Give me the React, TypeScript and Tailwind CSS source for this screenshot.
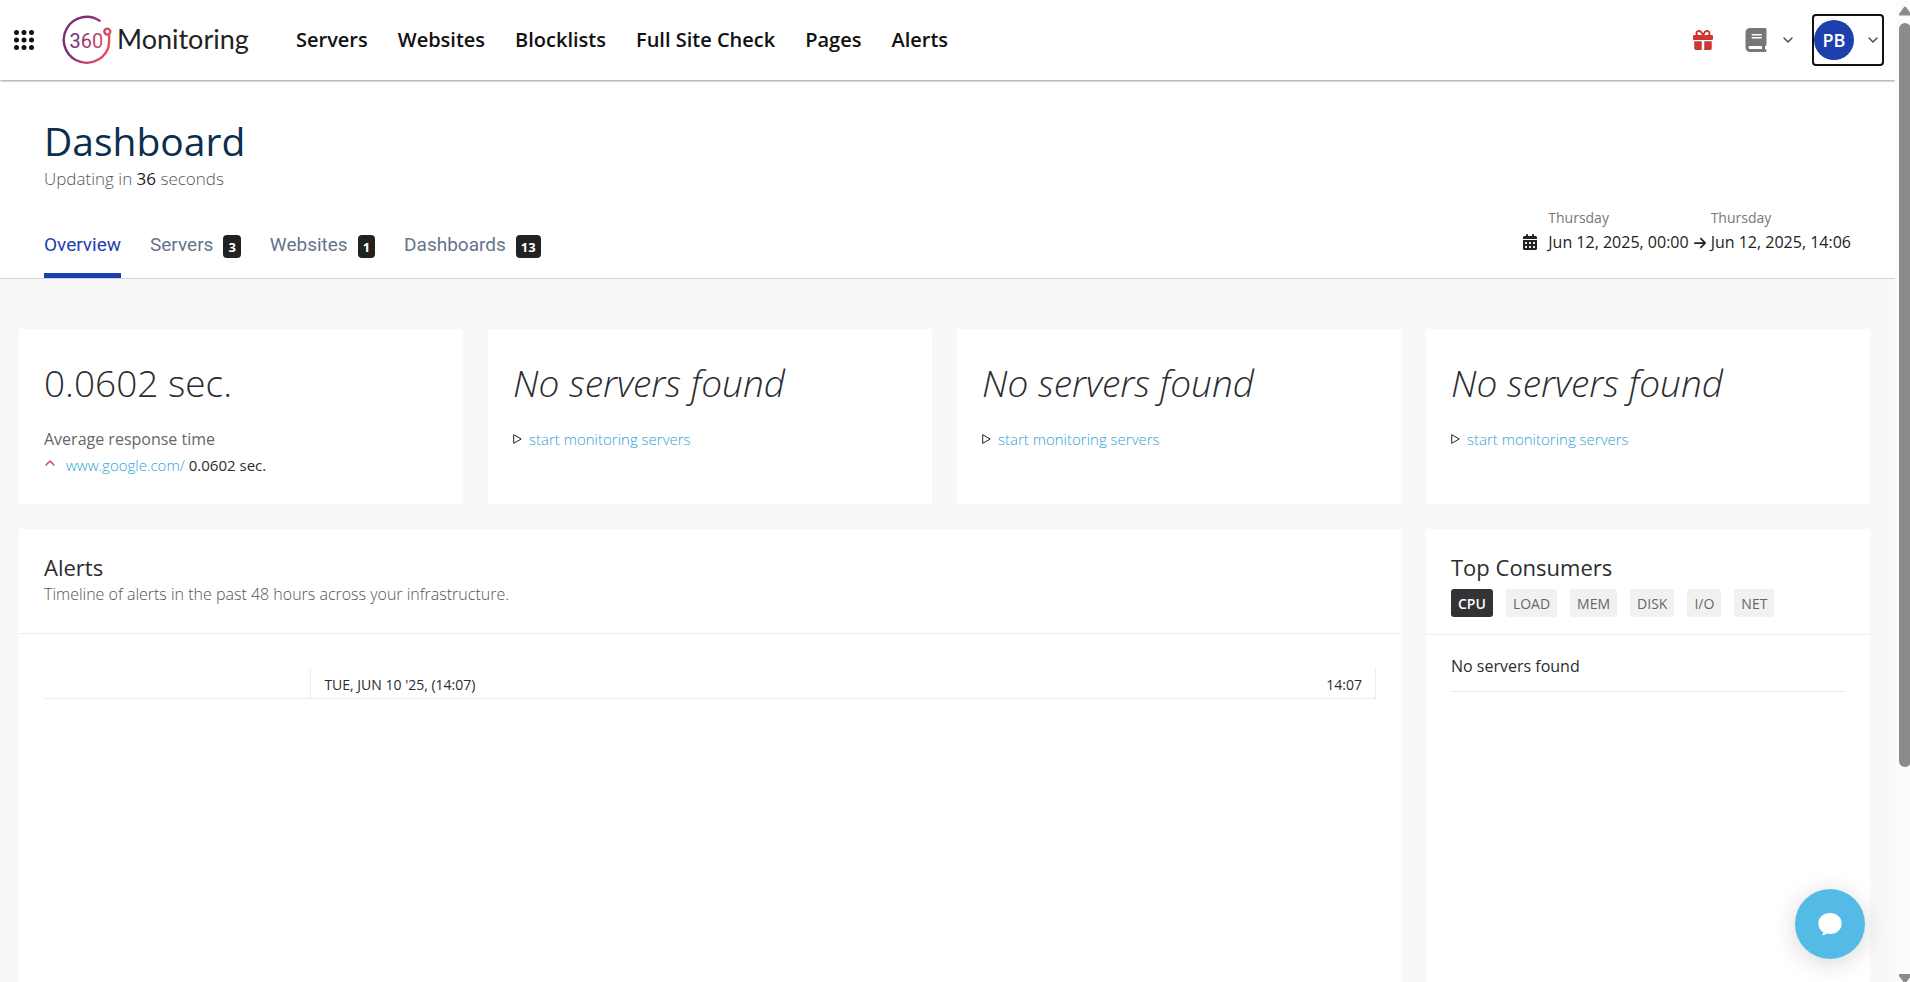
import React from "react";
import { FaArrowRight, FaBook, FaCalendarDays, FaGift } from "react-icons/fa6";
import { ChevronDown, ChevronUp } from "lucide-react";

const navItems = ["Servers", "Websites", "Blocklists", "Full Site Check", "Pages", "Alerts"];

const tabs = [
  { label: "Overview", active: true },
  { label: "Servers", count: 3 },
  { label: "Websites", count: 1 },
  { label: "Dashboards", count: 13 },
];

const metrics = ["CPU", "LOAD", "MEM", "DISK", "I/O", "NET"];

function AppsIcon() {
  const steps = [2.5, 10, 17.5];
  return (
    <svg viewBox="0 0 20 20" className="size-5" fill="#111" aria-hidden="true">
      {steps.map((y) => steps.map((x) => <circle key={`${x}-${y}`} cx={x} cy={y} r="2.5" />))}
    </svg>
  );
}

function Logo() {
  return (
    <svg viewBox="0 0 192 50" className="h-[50px] w-[192px]" role="img" aria-label="360 Monitoring">
      <defs>
        <linearGradient id="brand" gradientUnits="userSpaceOnUse" x1="4" y1="14" x2="48" y2="34">
          <stop offset="0.25" stopColor="#752d7c" />
          <stop offset="0.9" stopColor="#e4505a" />
        </linearGradient>
      </defs>
      <g fill="none" stroke="url(#brand)" strokeWidth="2.4" strokeLinecap="round">
        <path d="M37.7 5.8A23 23 0 1 0 45.8 34C46.9 31 47.3 27.5 47.1 20" />
        <circle cx="45.3" cy="16.6" r="3" />
      </g>
      <text x="7.5" y="33" fill="url(#brand)" className="font-['Roboto'] text-[20px]">
        360
      </text>
      <text x="55" y="34" fill="#222" className="font-['Lato'] text-[27px]">
        Monitoring
      </text>
    </svg>
  );
}

function Header() {
  return (
    <header className="relative flex h-20 items-center bg-white pr-[11px] pl-3.5 shadow-[0_1px_2px_rgba(0,0,0,0.4)]">
      <button type="button" aria-label="Apps">
        <AppsIcon />
      </button>
      <a href="#" className="ml-7">
        <Logo />
      </a>
      <nav className="ml-[42px] flex gap-[30px] text-[20px] font-semibold text-[#111]">
        {navItems.map((item) => (
          <a key={item} href="#" className="whitespace-nowrap">
            {item}
          </a>
        ))}
      </nav>
      <div className="ml-auto flex items-center">
        <button type="button" aria-label="Rewards" className="mr-[31px] text-[#cc3733]">
          <FaGift className="size-5" />
        </button>
        <button type="button" aria-label="Documentation" className="mr-4 flex items-center gap-3 text-[#777]">
          <FaBook className="size-6" />
          <ChevronDown className="size-4 text-[#444]" />
        </button>
        <button
          type="button"
          aria-label="Account"
          className="flex h-[52px] w-[72px] items-center justify-between rounded-[4px] border-2 border-[#111] pr-px"
        >
          <span className="flex size-10 items-center justify-center rounded-full bg-[#1e40af] text-[18px] font-semibold text-white">
            PB
          </span>
          <ChevronDown className="size-4 text-[#444]" />
        </button>
      </div>
    </header>
  );
}

function DateCell({ value }: { value: string }) {
  return (
    <span className="flex flex-col">
      <span className="text-[14px] leading-6 text-[#777]">Thursday</span>
      <span className="text-[16px] leading-6 text-[#222]">{value}</span>
    </span>
  );
}

function TitleBar() {
  return (
    <section className="flex items-end justify-between border-b border-[#d1d1db] bg-white pt-[34px] pr-11 pl-11">
      <div>
        <h1 className="text-[39px] leading-[53px] text-[#0b2f4d]">Dashboard</h1>
        <p className="text-[17px] leading-6 font-light text-[#555]">
          Updating in <span className="font-normal text-[#222]">36</span> seconds
        </p>
        <nav className="mt-8 flex gap-[29px] font-['Roboto',sans-serif] text-[19px]">
          {tabs.map((tab) => (
            <a
              key={tab.label}
              href="#"
              className={
                tab.active
                  ? "flex h-[55px] items-start border-b-5 border-[#1e40af] pt-2 leading-[28px] text-[#1e40af]"
                  : "flex h-[55px] items-start pt-2 leading-[28px] text-[#64748b]"
              }
            >
              {tab.label}
              {tab.count && (
                <span className="mt-1 ml-2.5 flex h-[23px] items-center rounded-[4px] bg-[#222] px-[5px] font-['Open_Sans'] text-[13px] font-bold text-white">
                  {tab.count}
                </span>
              )}
            </a>
          ))}
        </nav>
      </div>
      <button type="button" className="mb-6 flex items-end text-left text-[#222]">
        <FaCalendarDays className="mr-2.5 mb-1 size-4" />
        <DateCell value="Jun 12, 2025, 00:00" />
        <FaArrowRight className="mx-1 mb-1 size-3.5" />
        <DateCell value="Jun 12, 2025, 14:06" />
      </button>
    </section>
  );
}

function ResponseCard() {
  return (
    <article className="h-[175px] bg-white px-[25px] pt-[26px]">
      <h2 className="text-[37px] leading-[56px] font-light">0.0602 sec.</h2>
      <p className="mt-[15px] text-[16px] leading-[26px] text-[#666]">Average response time</p>
      <p className="flex text-[15px] leading-[26px]">
        <ChevronUp className="mt-[3px] mr-2 -ml-0.5 size-4 text-[#dc3c46]" />
        <a href="#" className="font-light text-[#2f9fd8]">
          www.google.com/
        </a>
        <span className="ml-1">0.0602 sec.</span>
      </p>
    </article>
  );
}

function EmptyCard() {
  return (
    <article className="h-[175px] bg-white px-[25px] pt-[26px]">
      <h2 className="text-[37px] leading-[56px] font-light italic">No servers found</h2>
      <p className="mt-[15px] flex items-center gap-[7px] text-[15px] leading-[26px]">
        <svg viewBox="0 0 9 10" className="h-2.5 w-[9px]" fill="none" stroke="#222" strokeLinejoin="round" aria-hidden="true">
          <path d="M.7 .7 8.2 5 .7 9.3Z" />
        </svg>
        <a href="#" className="font-light text-[#2f9fd8]">
          start monitoring servers
        </a>
      </p>
    </article>
  );
}

function AlertsPanel() {
  return (
    <section className="col-span-3 bg-white">
      <div className="h-[105px] border-b border-[#ededed] px-[25px] pt-[22px]">
        <h2 className="text-[22px] leading-8">Alerts</h2>
        <p className="text-[16px] leading-[22px] font-light text-[#555]">
          Timeline of alerts in the past 48 hours across your infrastructure.
        </p>
      </div>
      <div className="mx-[25px] mt-[34px] flex h-[31px] border-b border-[#ededed] text-[14px]">
        <div className="w-1/5" />
        <div className="flex flex-1 items-center justify-between border-x border-[#ededed] px-[13px] pt-0.5">
          <span>TUE, JUN 10 '25, (14:07)</span>
          <span>14:07</span>
        </div>
      </div>
    </section>
  );
}

function ConsumersPanel() {
  return (
    <section className="bg-white">
      <div className="h-[106px] border-b border-[#ededed] px-[25px] pt-[22px]">
        <h2 className="text-[22px] leading-8">Top Consumers</h2>
        <div className="mt-1.5 flex gap-[13px] text-[14px]">
          {metrics.map((metric, i) => (
            <button
              key={metric}
              type="button"
              className={
                i === 0
                  ? "h-7 rounded-[3px] bg-[#333335] px-[7px] font-semibold text-white"
                  : "h-7 rounded-[3px] bg-[#f1f1f1] px-[7px] text-[#666]"
              }
            >
              {metric}
            </button>
          ))}
        </div>
      </div>
      <p className="mx-[25px] border-b border-[#ededed] pt-[19px] pb-[13px] text-[16px] leading-6">No servers found</p>
    </section>
  );
}

function ScrollTrack() {
  return (
    <div aria-hidden="true" className="sticky top-0 flex h-screen w-[15px] shrink-0 flex-col justify-between overflow-hidden bg-[#fcfcfc] pl-1">
      <svg viewBox="0 0 12 16" className="h-4 w-3 shrink-0" fill="#8b8b8b">
        <path d="M0 15.5V14L5 7Q6 6 7 7L12 14V15.5Z" />
      </svg>
      <div className="mt-[7px] mb-[207px] w-3 flex-1 rounded-full bg-[#8b8b8b]" />
      <svg viewBox="0 0 12 8" className="h-2 w-3 shrink-0" fill="#8b8b8b">
        <path d="M0 0H12V2L7.5 8H4.5L0 2Z" />
      </svg>
    </div>
  );
}

export default function App() {
  return (
    <div className="flex min-h-screen bg-[#f8f8f8] font-['Open_Sans',sans-serif] text-[#2c2c2e]">
      <div className="flex min-w-0 flex-1 flex-col">
        <Header />
        <TitleBar />
        <main className="grid flex-1 grid-cols-4 grid-rows-[auto_1fr] gap-[25px] pt-[50px] pr-[25px] pl-[19px]">
          <ResponseCard />
          <EmptyCard />
          <EmptyCard />
          <EmptyCard />
          <AlertsPanel />
          <ConsumersPanel />
        </main>
      </div>
      <ScrollTrack />
      <button
        type="button"
        aria-label="Open chat"
        className="fixed right-[45px] bottom-[23px] flex size-[70px] items-center justify-center rounded-full bg-[#54bbe6] shadow-[0_4px_24px_rgba(0,0,0,0.16)]"
      >
        <svg viewBox="0 0 24 24" className="size-6" fill="#fff" aria-hidden="true">
          <path d="M12 1C5.4 1 .3 5.5.3 11.5c0 3.7 1.9 6.8 4.9 8.7-.2 1.4-.9 2.3-1.5 3.1 1.9.1 3.7-.6 5-1.7 1 .3 2.2.4 3.3.4 6.6 0 11.700-4.500 11.700-10.500S18.600 1 12 1Z" />
        </svg>
      </button>
    </div>
  );
}
